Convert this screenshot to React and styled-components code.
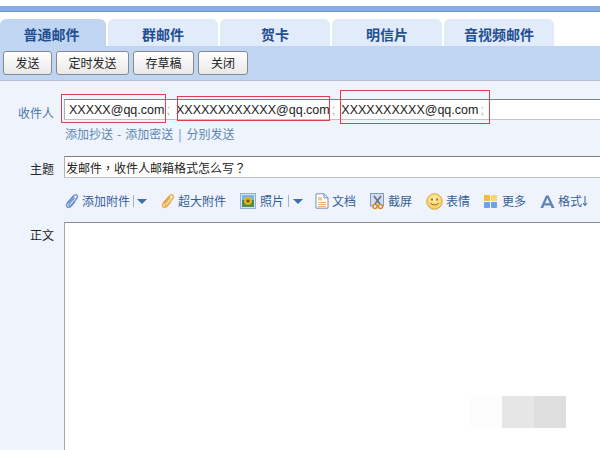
import React from "react";
import styled, { createGlobalStyle } from "styled-components";

const Global = createGlobalStyle`
  html, body { margin: 0; padding: 0; background: #fff; }
  body { font-family: "Liberation Sans", "Noto Sans CJK SC", sans-serif; }
  #root { width: 600px; height: 450px; overflow: hidden; }
`;
const Page = styled.div`
  position: relative; width: 600px; height: 450px; overflow: hidden;
  display: flex; flex-direction: column; background: #fff; padding-top: 6px; box-sizing: border-box;
`;
const TopBar = styled.div`
  height: 6px; flex: none; background: #86aee6; border-bottom: 1px solid #6f97d6; box-sizing: border-box;
`;
const Tabs = styled.div`
  display: flex; gap: 2px; margin-top: 7px; height: 27px; flex: none;
`;
const Tab = styled.div`
  width: ${p => p.$w}px; height: 27px; box-sizing: border-box; padding: 5px ${p => (p.$active ? 3 : 0)}px 0 0; text-align: center;
  border-radius: 6px 6px 0 0; background: ${p => (p.$active ? "#bfd5f1" : "#e1ebf9")};
  color: #1f4f92; font-size: 14px; line-height: 20px; font-weight: 700;
  font-family: "Noto Sans CJK SC", sans-serif;
`;
const Toolbar = styled.div`
  height: 35px; flex: none; box-sizing: border-box; background: #bfd5f1; border-bottom: 1px solid #b4c0cf;
  display: flex; gap: 4px; padding: 5px 0 0 3px;
`;
const Btn = styled.div`
  width: ${p => p.$w}px; height: 24px; box-sizing: border-box; text-align: center;
  border: 1px solid #868a90; border-radius: 3px; background: linear-gradient(#fff, #e9e9e9);
  font-size: 12px; line-height: 22px; color: #222;
  font-family: "Noto Sans CJK SC", sans-serif;
`;
const Form = styled.div`
  flex: 1; background: #eff4fc; display: flex; flex-direction: column; padding-top: 18px; min-height: 0;
`;
const Row = styled.div`
  display: flex; align-items: flex-start;
`;
const BodyRow = styled(Row)`
  flex: 1; align-items: stretch; min-height: 0;
`;
const Label = styled.div`
  width: 54px; margin-right: 10px; flex: none; text-align: right; font-size: 12px; line-height: 18px; padding-top: ${p => p.$top}px;
  color: ${p => p.$color}; font-family: "Noto Sans CJK SC", sans-serif;
`;
const Input = styled.div`
  flex: 1; height: ${p => p.$h}px; box-sizing: border-box; background: #fff;
  border-top: 1px solid #808080; border-left: 1px solid #b0b0b0; border-bottom: 1px solid #c2c2c2;
  display: flex; align-items: center; white-space: nowrap;
`;
const Addr = styled.span`
  font-size: 12.5px; color: #222; margin-left: ${p => p.$ml}px;
`;
const Semi = styled.span`
  font-size: 13px; color: #aaa; margin-left: 2px;
`;
const Links = styled.div`
  margin: 3px 0 13px 65px; font-size: 12px; line-height: 18px; height: 18px; color: #5c85b3; display: flex;
  font-family: "Noto Sans CJK SC", sans-serif;
`;
const Sep = styled.span`
  margin: 0 ${p => p.$m}px;
`;
const SubjectText = styled.span`
  font-size: 12px; color: #222; margin-left: 1px; font-family: "Noto Sans CJK TC", "Noto Sans CJK SC", sans-serif;
`;
const Attach = styled.div`
  height: 44px; flex: none; display: flex; align-items: center; padding: 2px 0 0 65px; box-sizing: border-box;
  font-size: 12px; color: #355f97; font-family: "Noto Sans CJK SC", sans-serif; white-space: nowrap;
`;
const Tool = styled.span`
  display: inline-flex; align-items: center; gap: ${p => p.$gap ?? 3}px; margin-left: ${p => p.$ml || 0}px; line-height: 18px;
`;
const Divider = styled.i`
  width: 1px; height: 12px; background: #9fb4cf; display: block;
`;
const Caret = styled.i`
  width: 0; height: 0; border-left: 5px solid transparent; border-right: 5px solid transparent; border-top: 5px solid #3f6eae; display: block;
`;
const BodyBox = styled.div`
  flex: 1; background: #fff; box-sizing: border-box; border-top: 1px solid #8c8c8c; border-left: 1px solid #a8a8a8;
`;
const Red = styled.div`
  position: absolute; box-sizing: border-box; border: 1px solid #d8404a;
  left: ${p => p.$x}px; top: ${p => p.$y}px; width: ${p => p.$w}px; height: ${p => p.$h}px;
`;
const Mark = styled.div`
  position: absolute; left: 470px; top: 396px; display: flex;
`;
const MarkCell = styled.div`
  width: 32px; height: 32px; background: ${p => p.$c};
`;

const Clip = ({ c, d }) => (
  <svg width="14" height="16" viewBox="0 0 14 16" fill="none">
    <path d="M9.6 4.6 4.4 10.6c-.7.9-.6 1.6 0 2 .6.4 1.2.2 1.9-.6l5.2-6.2c1.3-1.6 1.2-3 .2-3.7-1-.7-2.2-.4-3.3.9L2.7 9.6c-1.4 1.7-1.5 3.3-.4 4.3 1 .9 2.6.6 3.9-.9l3.9-4.6" stroke={c} strokeWidth="1.5" />
    <path d="M8.6 3.4 3.2 9.8" stroke={d} strokeWidth=".7" />
  </svg>
);
const Photo = () => (
  <svg width="16" height="16" viewBox="0 0 16 16">
    <rect x=".5" y=".5" width="15" height="15" fill="#d8e4f5" stroke="#8fb0d8" />
    <rect x="2" y="2" width="12" height="12" fill="#4c8f4a" />
    <rect x="2" y="2" width="12" height="5" fill="#7fb4dc" />
    <circle cx="8" cy="8" r="3.8" fill="#f2b915" />
    <circle cx="8" cy="8" r="1.7" fill="#7c5214" />
  </svg>
);
const Doc = () => (
  <svg width="14" height="16" viewBox="0 0 14 16" fill="none">
    <path d="M1 .8h8l4 4v10.4H1z" fill="#fff" stroke="#7391bb" />
    <path d="M9 .8v4h4" stroke="#7391bb" />
    <rect x="3" y="4" width="4" height="3.5" fill="#f5c98a" />
    <path d="M3 9.5h8M3 11.5h8M3 13.5h8" stroke="#e0b078" />
  </svg>
);
const Shot = () => (
  <svg width="16" height="17" viewBox="0 0 16 17" fill="none">
    <rect x=".5" y=".5" width="13" height="12.5" fill="#cfdcee" stroke="#7f9cc4" />
    <path d="m4 3 6 8M11 3l-6 8" stroke="#6f6f78" strokeWidth="1.6" />
    <circle cx="5" cy="13.5" r="2" fill="#fff" stroke="#e08a1c" strokeWidth="1.6" />
    <circle cx="10.5" cy="13.5" r="2" fill="#fff" stroke="#e08a1c" strokeWidth="1.6" />
  </svg>
);
const Smile = () => (
  <svg width="17" height="17" viewBox="0 0 17 17">
    <defs>
      <radialGradient id="sm" cx=".5" cy=".35" r=".7">
        <stop offset="0" stopColor="#fff0a8" />
        <stop offset="1" stopColor="#f8c654" />
      </radialGradient>
    </defs>
    <circle cx="8.5" cy="8.5" r="7.8" fill="url(#sm)" stroke="#d9a441" />
    <ellipse cx="6" cy="6.5" rx=".9" ry="1.2" fill="#8a6a1e" />
    <ellipse cx="11" cy="6.5" rx=".9" ry="1.2" fill="#8a6a1e" />
    <path d="M4.5 10c1 2.4 7 2.4 8 0" fill="none" stroke="#8a6a1e" />
  </svg>
);
const More = () => (
  <svg width="13" height="13" viewBox="0 0 13 13">
    <rect width="6" height="6" rx=".8" fill="#f5b93c" />
    <rect x="7" width="6" height="6" rx=".8" fill="#fbd56a" />
    <rect y="7" width="6" height="6" rx=".8" fill="#6ea2e8" />
    <rect x="7" y="7" width="6" height="6" rx=".8" fill="#6ea2e8" />
  </svg>
);
const LetterA = () => (
  <svg width="15" height="13" viewBox="0 0 15 13">
    <path fillRule="evenodd" d="M.4 13 6 .6h2.6L14.6 13h-3l-1-2.6H4.2L3.2 13zM5.1 8.3h4.6L7.4 3z" fill="#5f85bb" />
  </svg>
);
const DownArrow = () => (
  <svg width="6" height="12" viewBox="0 0 6 12" fill="none" style={{ marginLeft: -3 }}>
    <path d="M3 1v9.5M1 8l2 2.6L5 8" stroke="#355f97" />
  </svg>
);

export default function App() {
  return (
    <Page>
      <Global />
      <TopBar />
      <Tabs>
        <Tab $w={106} $active>普通邮件</Tab>
        <Tab $w={110}>群邮件</Tab>
        <Tab $w={110}>贺卡</Tab>
        <Tab $w={110}>明信片</Tab>
        <Tab $w={110}>音视频邮件</Tab>
      </Tabs>
      <Toolbar>
        <Btn $w={49}>发送</Btn>
        <Btn $w={73}>定时发送</Btn>
        <Btn $w={61}>存草稿</Btn>
        <Btn $w={50}>关闭</Btn>
      </Toolbar>
      <Form>
        <Row>
          <Label $top={5} $color="#4a76a8">收件人</Label>
          <Input $h={21}>
            <Addr $ml={4}>XXXXX@qq.com</Addr><Semi>;</Semi>
            <Addr $ml={6}>XXXXXXXXXXXX@qq.com</Addr><Semi>;</Semi>
            <Addr $ml={6}>XXXXXXXXXX@qq.com</Addr><Semi>;</Semi>
          </Input>
        </Row>
        <Links>
          添加抄送<Sep $m={4}>-</Sep>添加密送<Sep $m={5}>|</Sep>分别发送
        </Links>
        <Row>
          <Label $top={4} $color="#222">主题</Label>
          <Input $h={22}><SubjectText>发邮件，收件人邮箱格式怎么写？</SubjectText></Input>
        </Row>
        <Attach>
          <Tool><Clip c="#6d94c8" d="#3f6eae" />添加附件<Divider /><Caret /></Tool>
          <Tool $ml={14}><Clip c="#eab04a" d="#b97a1c" />超大附件</Tool>
          <Tool $ml={14} $gap={4}><Photo />照片<Divider /><Caret /></Tool>
          <Tool $ml={12}><Doc />文档</Tool>
          <Tool $ml={14} $gap={2}><Shot />截屏</Tool>
          <Tool $ml={14}><Smile />表情</Tool>
          <Tool $ml={14} $gap={5}><More />更多</Tool>
          <Tool $ml={14}><LetterA />格式<DownArrow /></Tool>
        </Attach>
        <BodyRow>
          <Label $top={4} $color="#222">正文</Label>
          <BodyBox />
        </BodyRow>
      </Form>
      <Red $x={61} $y={94} $w={105} $h={29} />
      <Red $x={177} $y={96} $w={153} $h={25} />
      <Red $x={340} $y={90} $w={150} $h={34} />
      <Mark>
        <MarkCell $c="#fcfcfc" />
        <MarkCell $c="#e6e6e6" />
        <MarkCell $c="#dedede" />
      </Mark>
    </Page>
  );
}
